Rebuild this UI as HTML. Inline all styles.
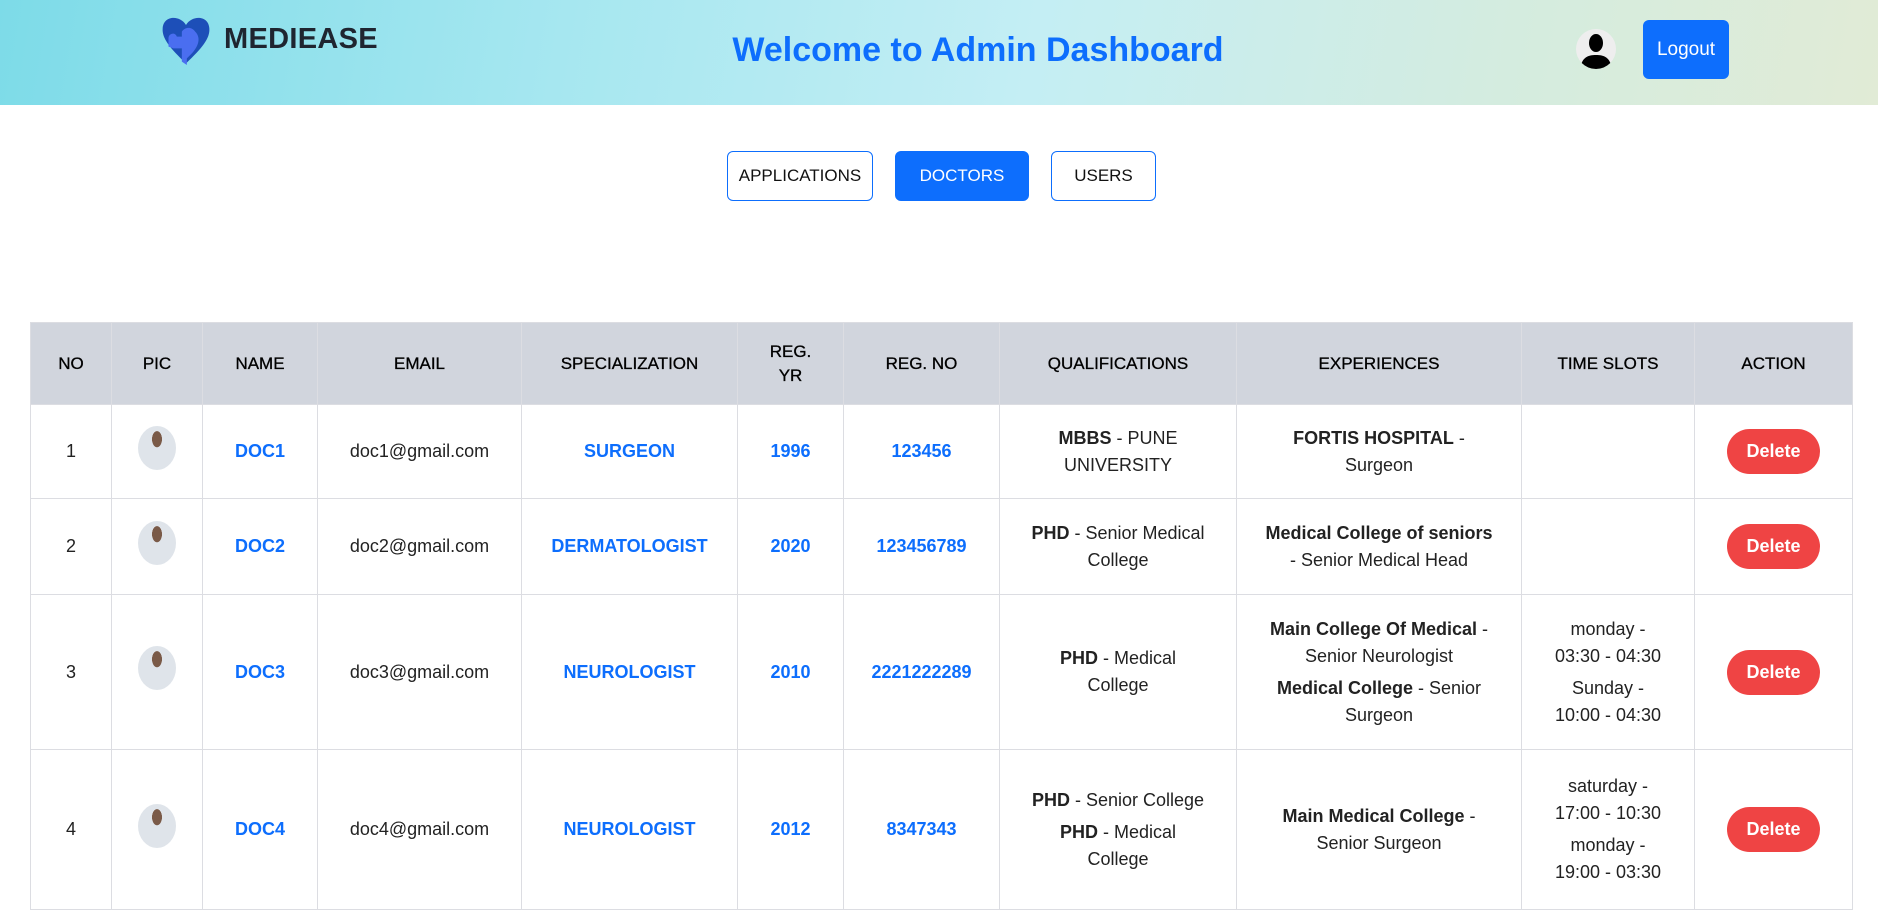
<!DOCTYPE html>
<html><head><meta charset="utf-8"><style>
*{box-sizing:border-box;margin:0;padding:0}
body{width:1878px;height:883px;overflow:hidden;background:#fff;font-family:"Liberation Sans",sans-serif;color:#111;position:relative}
.hdr{position:absolute;left:0;top:0;width:1878px;height:105px;background:linear-gradient(100deg,#7ddbe8 0%,#a6e7f0 30%,#c4eef4 55%,#d4ecdf 80%,#e1ebd6 100%)}
.logo{position:absolute;left:157px;top:15px}
.brand{position:absolute;left:224px;top:23px;font-size:29px;font-weight:bold;color:#1f2530;letter-spacing:0.3px}
.title{position:absolute;left:0;width:1956px;top:31px;text-align:center;font-size:34px;font-weight:bold;color:#0d6efd}
.av{position:absolute;left:1576px;top:29px;width:40px;height:40px;border-radius:50%;background:#eee;overflow:hidden}
.logout{position:absolute;left:1643px;top:20px;width:86px;height:59px;background:#0d6efd;color:#fff;border-radius:6px;font-size:19px;text-align:center;line-height:59px}
.tab{position:absolute;top:151px;height:50px;border:1px solid #0d6efd;border-radius:6px;font-size:17px;text-align:center;line-height:48px;color:#111}
table{position:absolute;left:30px;top:322px;width:1822px;border-collapse:collapse;table-layout:fixed}
th,td{border:1px solid #dcdde2;text-align:center;vertical-align:middle}
th{background:#d1d5dd;height:82px;font-size:17px;font-weight:normal;color:#000;line-height:24px;-webkit-text-stroke:0.3px #000}
td{font-size:18px;line-height:27px;color:#222}
.b{color:#0d6efd;font-weight:bold;font-size:18px}
.del{display:inline-block;width:93px;height:45px;border-radius:23px;background:#ef4444;color:#fff;font-weight:bold;font-size:18px;line-height:45px}
.pic{display:inline-block;width:38px;height:44px;border-radius:50%;background:radial-gradient(ellipse at 50% 30%,#7a5a48 0 18%,#dfe4ea 19% 100%)}
p+p{margin-top:5px}
</style></head><body>
<div class="hdr">
<svg class="logo" width="58" height="50" viewBox="0 0 58 60"><path d="M29 12 C22 0 2 0 1 16 C0 28 10 40 29 58 C48 40 58 28 57 16 C56 0 36 0 29 12Z" fill="#1d4fb8"/><path d="M8 38 L8 28 C8 22 16 20 18 26 L24 26 L24 20 C28 14 36 14 40 20 C48 28 44 40 30 52 L30 60 L24 56 L24 40 L14 40 Z" fill="#4a6ef0"/></svg>
<div class="brand">MEDIEASE</div>
<div class="title">Welcome to Admin Dashboard</div>
<div class="av"><svg width="40" height="40" viewBox="0 0 40 40"><ellipse cx="20" cy="14" rx="7" ry="9" fill="#000"/><path d="M4 40 C6 28 12 26 20 26 C28 26 34 28 36 40Z" fill="#000"/></svg></div>
<div class="logout">Logout</div>
</div>
<div class="tab" style="left:727px;width:146px">APPLICATIONS</div>
<div class="tab" style="left:895px;width:134px;background:#0d6efd;color:#fff">DOCTORS</div>
<div class="tab" style="left:1051px;width:105px">USERS</div>
<table>
<colgroup><col style="width:81px"><col style="width:91px"><col style="width:115px"><col style="width:204px"><col style="width:216px"><col style="width:106px"><col style="width:156px"><col style="width:237px"><col style="width:285px"><col style="width:173px"><col style="width:158px"></colgroup>
<tr><th>NO</th><th>PIC</th><th>NAME</th><th>EMAIL</th><th>SPECIALIZATION</th><th>REG.<br>YR</th><th>REG. NO</th><th>QUALIFICATIONS</th><th>EXPERIENCES</th><th>TIME SLOTS</th><th>ACTION</th></tr>
<tr style="height:94px"><td>1</td><td><span class="pic"></span></td><td class="b">DOC1</td><td>doc1@gmail.com</td><td class="b">SURGEON</td><td class="b">1996</td><td class="b">123456</td><td><p><b style="font-weight:600">MBBS</b> - PUNE<br>UNIVERSITY</p></td><td><p><b style="font-weight:600">FORTIS HOSPITAL</b> -<br>Surgeon</p></td><td></td><td><span class="del">Delete</span></td></tr>
<tr style="height:96px"><td>2</td><td><span class="pic"></span></td><td class="b">DOC2</td><td>doc2@gmail.com</td><td class="b">DERMATOLOGIST</td><td class="b">2020</td><td class="b">123456789</td><td><p><b style="font-weight:600">PHD</b> - Senior Medical<br>College</p></td><td><p><b style="font-weight:600">Medical College of seniors</b><br>- Senior Medical Head</p></td><td></td><td><span class="del">Delete</span></td></tr>
<tr style="height:155px"><td>3</td><td><span class="pic"></span></td><td class="b">DOC3</td><td>doc3@gmail.com</td><td class="b">NEUROLOGIST</td><td class="b">2010</td><td class="b">2221222289</td><td><p><b style="font-weight:600">PHD</b> - Medical<br>College</p></td><td><p><b style="font-weight:600">Main College Of Medical</b> -<br>Senior Neurologist</p><p><b style="font-weight:600">Medical College</b> - Senior<br>Surgeon</p></td><td><p>monday -<br>03:30 - 04:30</p><p>Sunday -<br>10:00 - 04:30</p></td><td><span class="del">Delete</span></td></tr>
<tr style="height:160px"><td>4</td><td><span class="pic"></span></td><td class="b">DOC4</td><td>doc4@gmail.com</td><td class="b">NEUROLOGIST</td><td class="b">2012</td><td class="b">8347343</td><td><p><b style="font-weight:600">PHD</b> - Senior College</p><p><b style="font-weight:600">PHD</b> - Medical<br>College</p></td><td><p><b style="font-weight:600">Main Medical College</b> -<br>Senior Surgeon</p></td><td><p>saturday -<br>17:00 - 10:30</p><p>monday -<br>19:00 - 03:30</p></td><td><span class="del">Delete</span></td></tr>
</table>
</body></html>
